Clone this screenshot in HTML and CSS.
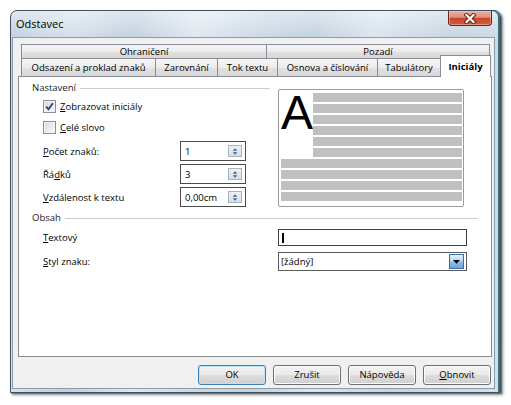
FILE: index.html
```html
<!DOCTYPE html>
<html lang="cs">
<head>
<meta charset="utf-8">
<title>Odstavec</title>
<link rel="stylesheet" href="styles.css">
</head>
<body>
<div class="window">
  <div class="titlebar">
    <span class="title">Odstavec</span>
    <div class="close" aria-label="Zavřít">
      <svg width="14" height="11" viewBox="0 0 14 11">
        <path d="M3.5 2 L10.5 9 M10.5 2 L3.5 9" stroke="#5a1c12" stroke-width="4" stroke-linecap="square"/>
        <path d="M3.5 2 L10.5 9 M10.5 2 L3.5 9" stroke="#ffffff" stroke-width="2.2" stroke-linecap="square"/>
      </svg>
    </div>
  </div>
  <div class="client">
    <div class="tabs">
      <div class="tab-row back">
        <div class="tab back-tab w-ohr">Ohraničení</div>
        <div class="tab back-tab w-poz">Pozadí</div>
      </div>
      <div class="tab-row front">
        <div class="tab w-ods">Odsazení a proklad znaků</div>
        <div class="tab w-zar">Zarovnání</div>
        <div class="tab w-tok">Tok textu</div>
        <div class="tab w-osn">Osnova a číslování</div>
        <div class="tab w-tab">Tabulátory</div>
        <div class="tab selected">Iniciály</div>
      </div>
    </div>
    <div class="panel">
      <div class="top">
        <div class="settings">
          <div class="group-head"><span>Nastavení</span><span class="rule rule-short"></span></div>
          <div class="check first">
            <span class="box">
              <svg width="11" height="11" viewBox="0 0 11 11"><path d="M2.2 5.6 L4.5 8.2 L8.8 2.2" fill="none" stroke="#2e3f86" stroke-width="1.9"/></svg>
            </span>
            <span><u>Z</u>obrazovat iniciály</span>
          </div>
          <div class="check second">
            <span class="box"></span>
            <span><u>C</u>elé slovo</span>
          </div>
          <div class="field first-field">
            <span class="lbl"><u>P</u>očet znaků:</span>
            <span class="spin"><span class="val">1</span><span class="spinbtn"><svg width="13" height="11" viewBox="0 0 13 11"><path d="M4 4.6 L6.5 2 L9 4.6 Z M4 6.4 L6.5 9 L9 6.4 Z" fill="#4a6390"/></svg></span></span>
          </div>
          <div class="field">
            <span class="lbl">Řá<u>d</u>ků</span>
            <span class="spin"><span class="val">3</span><span class="spinbtn"><svg width="13" height="11" viewBox="0 0 13 11"><path d="M4 4.6 L6.5 2 L9 4.6 Z M4 6.4 L6.5 9 L9 6.4 Z" fill="#4a6390"/></svg></span></span>
          </div>
          <div class="field">
            <span class="lbl"><u>V</u>zdálenost k textu</span>
            <span class="spin"><span class="val">0,00cm</span><span class="spinbtn"><svg width="13" height="11" viewBox="0 0 13 11"><path d="M4 4.6 L6.5 2 L9 4.6 Z M4 6.4 L6.5 9 L9 6.4 Z" fill="#4a6390"/></svg></span></span>
          </div>
        </div>
        <div class="preview">
          <div class="pv-top">
            <div class="drop">A</div>
            <div class="bars">
              <div class="bar"></div><div class="bar"></div><div class="bar"></div>
              <div class="bar"></div><div class="bar"></div><div class="bar"></div>
            </div>
          </div>
          <div class="bars full">
            <div class="bar"></div><div class="bar"></div><div class="bar"></div><div class="bar"></div>
          </div>
        </div>
      </div>
      <div class="group-head obsah"><span>Obsah</span><span class="rule"></span></div>
      <div class="row row-text">
        <span class="lbl wide"><u>T</u>extový</span>
        <span class="textbox"><span class="caret"></span></span>
      </div>
      <div class="row row-select">
        <span class="lbl wide"><u>S</u>tyl znaku:</span>
        <span class="select"><span class="sel-val">[žádný]</span><span class="dd"><svg width="13" height="13" viewBox="0 0 13 13"><path d="M3 5 L10 5 L6.5 8.8 Z" fill="#000"/></svg></span></span>
      </div>
    </div>
    <div class="buttons">
      <div class="btn default">OK</div>
      <div class="btn">Zrušit</div>
      <div class="btn">Nápověda</div>
      <div class="btn"><u>O</u>bnovit</div>
    </div>
  </div>
</div>
</body>
</html>
```

FILE: styles.css
```css
* { box-sizing: border-box; }
html, body { margin: 0; padding: 0; }
body {
  width: 511px;
  height: 405px;
  overflow: hidden;
  background: #ffffff;
  font-family: "Open Sans", "Noto Sans", sans-serif;
  font-size: 9.5px;
  color: #000;
}
u { text-decoration: underline; text-underline-offset: 1px; }

.window {
  margin: 10px 0 0 10px;
  width: 491px;
  height: 383px;
  border: 1px solid #3e5061;
  border-radius: 7px 7px 0 0;
  padding: 0 5px 3px 1px;
  display: flex;
  flex-direction: column;
  background:
    linear-gradient(to bottom, rgba(255,255,255,0.45), rgba(255,255,255,0) 26px),
    linear-gradient(100deg, #c3d2e0 0%, #d5e0eb 12%, #c2d1df 22%, #dfe8f1 34%, #cbd9e6 46%, #c3d2e0 55%, #dae5ee 66%, #c7d5e3 80%, #d3dfea 100%);
  box-shadow: inset -2px 0 0 #3a6c7a, 2px 2px 3px rgba(0,0,0,0.45), 1px 1px 1px rgba(0,0,0,0.3);
}

.titlebar {
  height: 26px;
  display: flex;
  align-items: flex-start;
}
.title {
  padding: 6px 0 0 4px;
  line-height: 14px;
  font-size: 11px;
  color: #000;
}
.close {
  margin-left: auto;
  margin-right: 3px;
  width: 44px;
  height: 15px;
  border: 1px solid #6b2518;
  border-top: none;
  border-radius: 0 0 4px 4px;
  background: linear-gradient(to bottom, #eab0a2 0%, #de8f7d 45%, #c8472c 52%, #cf5e40 100%);
  box-shadow: inset 0 0 0 1px rgba(255,210,200,0.45);
  display: flex;
  align-items: center;
  justify-content: center;
}

.client {
  flex: 1;
  border: 1px solid #8c9caa;
  background: #f0f0f0;
  padding: 6px 2px 3px 5px;
  display: flex;
  flex-direction: column;
}

.tabs { display: flex; flex-direction: column; }
.tab-row { display: flex; margin-left: 3px; align-items: flex-start; }
.tab {
  height: 18px;
  border: 1px solid #898c95;
  border-bottom: none;
  margin-right: -1px;
  background: linear-gradient(to bottom, #f6f6f6 0%, #ececec 50%, #e1e1e1 51%, #d8d8d8 100%);
  text-align: center;
  line-height: 17px;
  white-space: nowrap;
}
.back-tab { height: 14px; line-height: 13px; }
.w-ohr { width: 246px; }
.w-poz { width: 224px; }
.w-ods { width: 135px; }
.w-zar { width: 63px; }
.w-tok { width: 61px; }
.w-osn { width: 101px; }
.w-tab { width: 64px; }
.tab.selected {
  width: 51px;
  height: 22px;
  margin-top: -3px;
  margin-bottom: -1px;
  background: #ffffff;
  font-weight: 700;
  line-height: 21px;
  position: relative;
  z-index: 1;
}

.panel {
  height: 281px;
  border: 1px solid #898c95;
  background: #ffffff;
  padding: 4px 13px 0 13px;
}

.top { display: flex; align-items: flex-start; }
.settings { width: 246px; display: flex; flex-direction: column; }

.group-head {
  display: flex;
  align-items: center;
  height: 14px;
  line-height: 14px;
  color: #1a1a1a;
}
.rule {
  flex: 1;
  height: 1px;
  margin-left: 4px;
  margin-top: 1px;
  background: #c9cfd5;
}
.rule-short { margin-right: 8px; }

.check {
  display: flex;
  align-items: center;
  height: 14px;
  margin-left: 11px;
  gap: 4px;
}
.check.first { margin-top: 4px; }
.check.second { margin-top: 7px; }
.box {
  width: 13px;
  height: 13px;
  border: 1px solid #8e8f91;
  background: linear-gradient(135deg, #d3d4d6 0%, #eeeeef 60%, #fafafa 100%);
  box-shadow: inset 0 0 0 1px #f4f4f4;
  display: flex;
  align-items: center;
  justify-content: center;
}

.field {
  display: flex;
  align-items: center;
  height: 20px;
  margin-top: 3px;
  margin-left: 11px;
}
.field.first-field { margin-top: 7px; }
.lbl { width: 137px; }
.lbl.wide { width: 235px; }

.spin {
  width: 66px;
  height: 20px;
  border: 1px solid #4a4a4a;
  background: #fff;
  display: flex;
  align-items: center;
  padding: 0 3px 0 4px;
}
.val { flex: 1; }
.spinbtn {
  width: 14px;
  height: 12px;
  border: 1px solid #a6b3c3;
  background: linear-gradient(to bottom, #eef2f7 0%, #d6dee8 100%);
  display: flex;
  align-items: center;
  justify-content: center;
}

.preview {
  width: 186px;
  height: 118px;
  margin-left: 0;
  margin-top: 8px;
  border: 1px solid #9c9c9c;
  border-radius: 2px;
  padding: 3px 1px 0 2px;
}
.pv-top { display: flex; }
.drop {
  width: 32px;
  font-family: "Liberation Sans", Arial, sans-serif;
  font-size: 48px;
  line-height: 40px;
  color: #000;
}
.bars { flex: 1; display: flex; flex-direction: column; gap: 2px; }
.bars.full { margin-top: 2px; }
.bar { height: 9px; background: #c0c0c0; }

.obsah { margin-top: 4px; }

.row {
  display: flex;
  align-items: center;
  margin-left: 11px;
}
.row-text { margin-top: 4px; height: 17px; }
.row-select { margin-top: 6px; height: 19px; }

.textbox {
  width: 189px;
  height: 17px;
  border: 1px solid #3f3f3f;
  background: #fff;
  display: flex;
  align-items: center;
  padding-left: 3px;
}
.caret { width: 2px; height: 10px; background: #000; }

.select {
  width: 189px;
  height: 19px;
  border: 1px solid #5a5a5a;
  background: #fff;
  display: flex;
  align-items: center;
  padding: 0 2px 0 2px;
}
.sel-val { flex: 1; }
.dd {
  width: 15px;
  height: 15px;
  border: 1px solid #3c6f9f;
  background: linear-gradient(to bottom, #e6f1fb 0%, #b6d5f0 48%, #8fc0ea 52%, #6aa7dc 100%);
  display: flex;
  align-items: center;
  justify-content: center;
}

.buttons {
  margin-top: 8px;
  margin-right: 1px;
  display: flex;
  justify-content: flex-end;
  gap: 7px;
}
.btn {
  width: 68px;
  height: 20px;
  border: 1px solid #707070;
  border-radius: 3px;
  background: linear-gradient(to bottom, #f3f3f3 0%, #ebebeb 48%, #dddddd 52%, #cfcfcf 100%);
  box-shadow: inset 0 0 0 1px #fbfbfb;
  text-align: center;
  line-height: 18px;
  color: #000;
}
.btn.default {
  border-color: #3c7fb1;
  box-shadow: inset 0 0 0 1px #b9e4f7;
}
```
